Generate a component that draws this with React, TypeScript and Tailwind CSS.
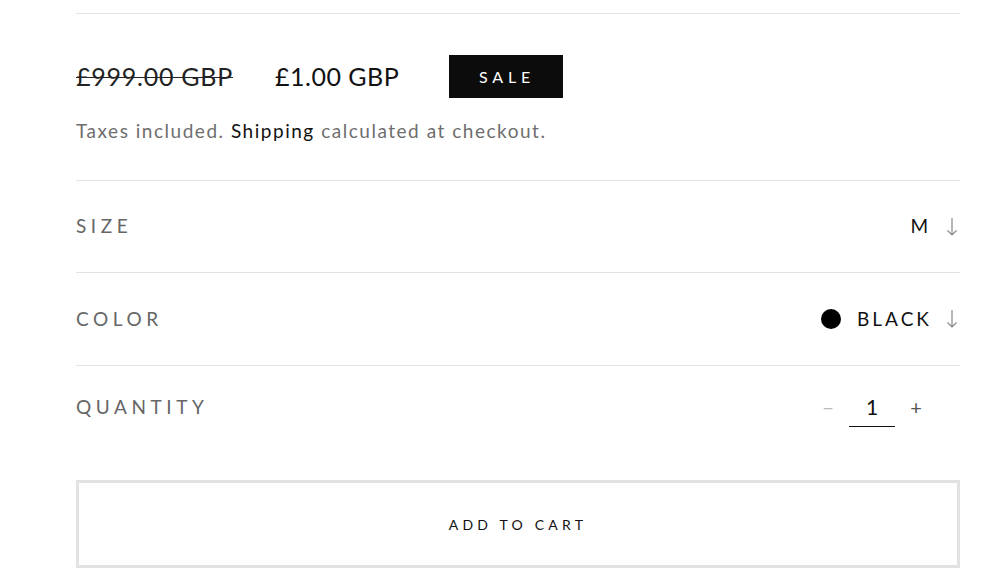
import React from "react";

const font = { fontFamily: "Lato, 'Liberation Sans', sans-serif" };

function DownArrow() {
  return (
    <svg width="12" height="20" viewBox="0 0 12 20" className="text-[#888]">
      <path d="M6 1 V18 M1.5 13.5 L6 18 L10.5 13.5" fill="none" stroke="currentColor" strokeWidth="1.2" />
    </svg>
  );
}

export default function App() {
  return (
    <div className="w-[1000px] h-[569px] bg-white overflow-hidden pl-[76px] pr-[40px]" style={font}>
      <div className="h-[13px]" />
      <div className="border-t border-[#e3e3e3]" />

      {/* prices */}
      <div className="mt-[41px] flex items-center h-[43px]">
        <span className="text-[25px] text-[#222] line-through decoration-1 tracking-[0.03em] w-[199px]">£999.00 GBP</span>
        <span className="text-[25px] text-[#111] tracking-[0.02em] w-[174px]">£1.00 GBP</span>
        <span className="bg-[#0c0c0c] text-white h-[43px] w-[114px] flex items-center justify-center text-[16px] tracking-[0.3em] pl-[2px]">
          SALE
        </span>
      </div>
      <p className="mt-[21px] text-[19px] leading-[24px] text-[#6e6e6e] tracking-[0.08em]">
        Taxes included. <span className="text-[#111]">Shipping</span> calculated at checkout.
      </p>

      <div className="mt-[37px] border-t border-[#e3e3e3]" />
      <div className="h-[91px] flex items-center justify-between">
        <span className="text-[19px] tracking-[0.24em] text-[#666]">SIZE</span>
        <div className="flex items-center gap-[14px] pr-[2px]">
          <span className="text-[19px] tracking-[0.2em] text-[#111]">M</span>
          <DownArrow />
        </div>
      </div>
      <div className="border-t border-[#e3e3e3]" />
      <div className="h-[92px] flex items-center justify-between">
        <span className="text-[19px] tracking-[0.24em] text-[#666]">COLOR</span>
        <div className="flex items-center gap-[14px] pr-[2px]">
          <span className="w-[20px] h-[20px] rounded-full bg-black mr-[2px]" />
          <span className="text-[19px] tracking-[0.16em] text-[#111]">BLACK</span>
          <DownArrow />
        </div>
      </div>
      <div className="border-t border-[#e3e3e3]" />
      <div className="h-[82px] flex items-center justify-between">
        <span className="text-[19px] tracking-[0.24em] text-[#666]">QUANTITY</span>
        <div className="flex items-center gap-[15px] pr-[38px]">
          <span className="text-[20px] text-[#bbb] w-[12px] text-center">−</span>
          <span className="w-[46px] text-center text-[21px] text-[#111] border-b border-[#111] pb-[4px] mt-[4px]">1</span>
          <span className="text-[20px] text-[#555] w-[12px] text-center">+</span>
        </div>
      </div>

      <button className="mt-[32px] w-full h-[88px] border-[3px] border-[#e2e2e2] bg-white flex items-center justify-center text-[14px] tracking-[0.3em] text-[#111]">
        ADD TO CART
      </button>
    </div>
  );
}
